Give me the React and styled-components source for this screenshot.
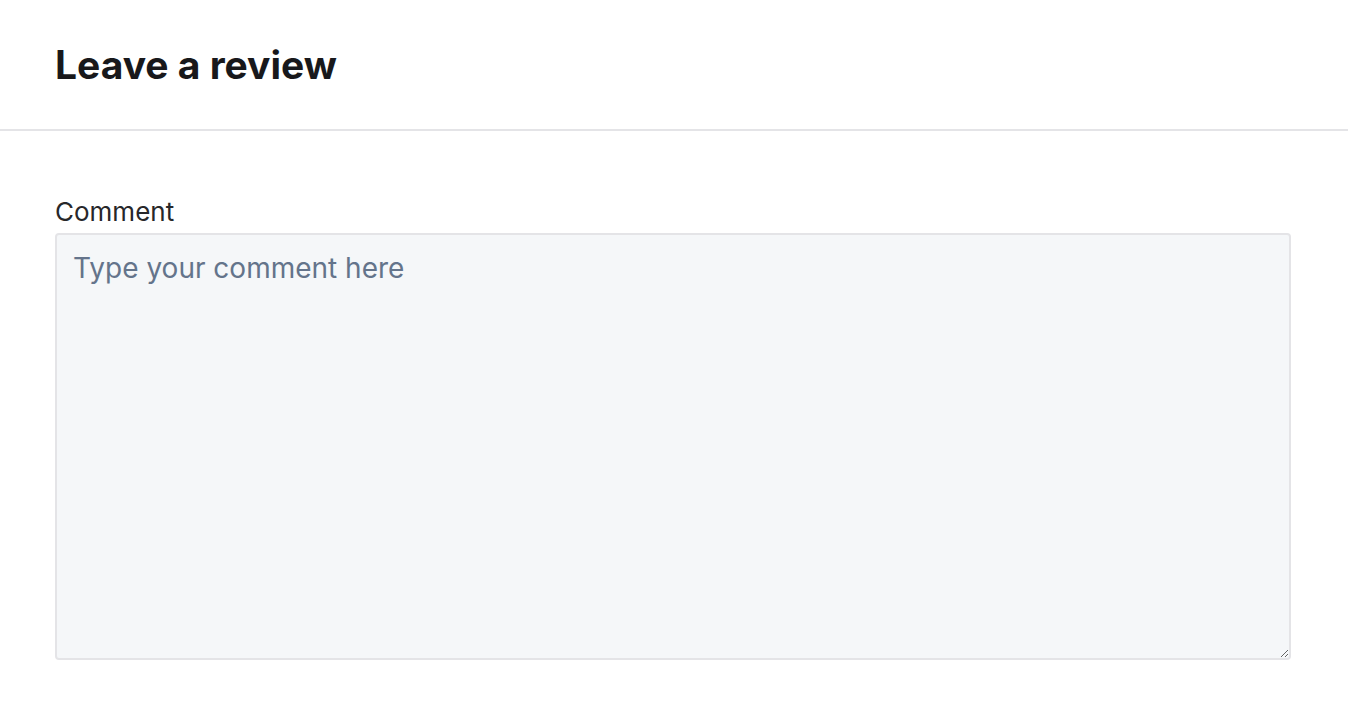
import React from 'react';
import styled, { createGlobalStyle } from 'styled-components';

const GlobalStyle = createGlobalStyle`
  body {
    margin: 0;
    background: #fff;
    font-family: Inter, "Noto Sans", sans-serif;
    color: #18181b;
  }
`;

const Header = styled.header`
  height: 131px;
  display: flex;
  align-items: center;
  padding: 0 55px;
  border-bottom: 2px solid #e4e4e7;
  box-sizing: border-box;
`;

const Title = styled.h1`
  margin: 0 0 1px;
  font-size: 39px;
  font-weight: 700;
  color: #18181b;
`;

const Body = styled.section`
  padding: 65px 57px 0 55px;
  display: flex;
  flex-direction: column;
  gap: 6px;
`;

const Label = styled.label`
  font-size: 26px;
  line-height: 31px;
  font-weight: 400;
  color: #27272a;
`;

const TextArea = styled.textarea`
  height: 427px;
  box-sizing: border-box;
  padding: 16px 16px;
  border: 2px solid #e4e4e7;
  border-radius: 4px;
  background: #f5f7f9;
  font-family: Inter, "Noto Sans", sans-serif;
  font-size: 28px;
  color: #18181b;
  outline: none;

  &::placeholder {
    color: #64748b;
  }
`;

export default function App() {
  return (
    <>
      <GlobalStyle />
      <Header>
        <Title>Leave a review</Title>
      </Header>
      <Body>
        <Label htmlFor="comment">Comment</Label>
        <TextArea id="comment" placeholder="Type your comment here" />
      </Body>
    </>
  );
}
